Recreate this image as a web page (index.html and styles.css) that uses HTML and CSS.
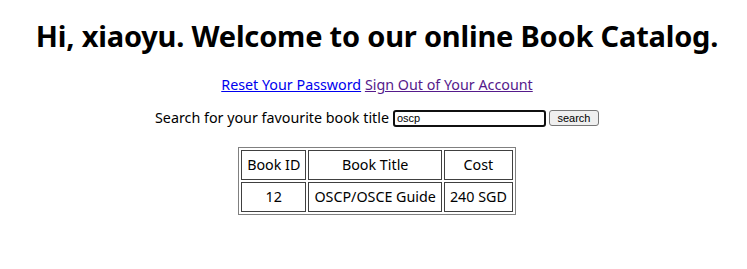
FILE: index.html
```html
<!DOCTYPE html>
<html>
<head>
<meta charset="utf-8">
<link rel="stylesheet" href="styles.css">
</head>
<body>
<div class="page">
  <h1 class="title">Hi, xiaoyu. Welcome to our online Book Catalog.</h1>
  <p class="links"><a class="link" href="#">Reset Your Password</a> <a class="link visited" href="#">Sign Out of Your Account</a></p>
  <form class="search">
    <label class="search-label">Search for your favourite book title</label>
    <input class="search-input" type="text" value="oscp">
    <button class="search-btn" type="button">search</button>
  </form>
  <table class="books">
    <tr><td class="cell">Book ID</td><td class="cell">Book Title</td><td class="cell">Cost</td></tr>
    <tr><td class="cell">12</td><td class="cell">OSCP/OSCE Guide</td><td class="cell">240 SGD</td></tr>
  </table>
</div>
</body>
</html>
```
FILE: styles.css
```css
html, body {
  margin: 0;
  background: #fff;
}
body {
  font-family: "Noto Sans", "Open Sans", sans-serif;
  color: #000;
}
.page {
  padding: 8px 8px 8px 15px;
  text-align: center;
}
.title {
  font-size: 29px;
  font-weight: bold;
  margin: 10px 0 21px;
  line-height: 36px;
  letter-spacing: -0.2px;
}
.links {
  font-size: 14.3px;
  margin: 0 0 13px;
  line-height: 20px;
}
.link {
  color: #0000ee;
}
.link.visited {
  color: #551a8b;
}
.search {
  display: flex;
  justify-content: center;
  align-items: center;
  gap: 4px;
  margin: 0 0 19px;
  font-size: 14.3px;
}
.search-label {
  line-height: 20px;
}
.search-input {
  box-sizing: border-box;
  width: 153px;
  height: 17px;
  border: 2px solid #101010;
  border-radius: 3px;
  padding: 0 2px;
  font-family: "Liberation Sans", Arial, sans-serif;
  font-size: 11px;
  outline: none;
}
.search-btn {
  box-sizing: border-box;
  font-family: "Liberation Sans", Arial, sans-serif;
  font-size: 11px;
  color: #000;
  width: 50px;
  height: 16px;
  padding: 0;
  background: #efefef;
  border: 1px solid #767676;
  border-radius: 3px;
  margin-left: -1px;
}
.books {
  margin: 0 auto;
  border: 1px solid #808080;
  border-spacing: 2px;
  font-size: 14.3px;
}
.cell {
  border: 1px solid #404040;
  padding: 5px 5px;
  line-height: 18px;
  text-align: center;
}
```
